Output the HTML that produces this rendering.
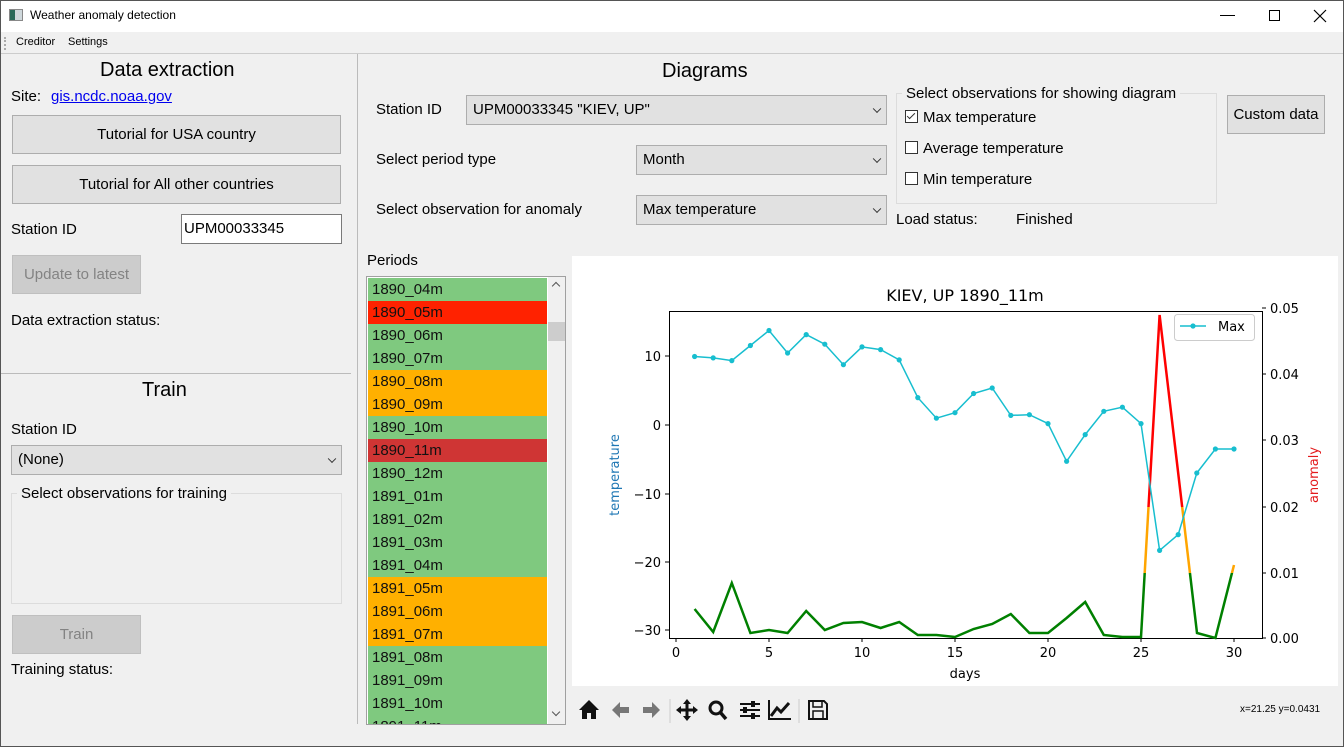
<!DOCTYPE html>
<html><head><meta charset="utf-8"><style>
*{box-sizing:border-box;margin:0;padding:0}
body{width:1344px;height:747px;overflow:hidden;background:#f0f0f0;font-family:"Liberation Sans",sans-serif;font-size:15px;color:#000;position:relative}
.a{position:absolute;white-space:nowrap}
.btn{position:absolute;background:#e1e1e1;border:1px solid #adadad;text-align:center}
.dis{background:#cccccc;border-color:#bfbfbf;color:#838383}
.cb{position:absolute;background:#e1e1e1;border:1px solid #adadad;padding-left:6px}
.cb:after{content:"";position:absolute;right:6px;top:50%;width:5px;height:5px;border-right:1px solid #333;border-bottom:1px solid #333;transform:translateY(-70%) rotate(45deg)}
.chk{display:inline-block;width:13px;height:13px;border:1px solid #333;background:#fff;vertical-align:-1px;margin-right:5px;position:relative}
.li{height:23px;line-height:23px;padding-left:4px;font-size:15px;color:#111}
.g{background:#7fc97f}.r{background:#ff2200}.o{background:#ffb000}.s{background:#cf3534}
svg text{font-family:"DejaVu Sans",sans-serif}
</style></head><body>
<div class="a" style="left:0;top:0;width:1344px;height:32px;background:#fff"></div>
<div class="a" style="left:9px;top:9px;width:14px;height:12px;border:1px solid #888;background:linear-gradient(90deg,#2a6a5a 40%,#cfd8dc 40%)"></div>
<div class="a" style="left:30px;top:8px;font-size:12px">Weather anomaly detection</div>
<div class="a" style="left:1220px;top:15px;width:15px;height:1px;background:#000"></div>
<div class="a" style="left:1269px;top:10px;width:11px;height:11px;border:1px solid #000"></div>
<svg class="a" style="left:1313px;top:9px" width="14" height="14"><path d="M1 1L13 13M13 1L1 13" stroke="#000" stroke-width="1.2"/></svg>
<div class="a" style="left:4px;top:37px;width:2px;height:13px;border-left:2px dotted #aaa"></div>
<div class="a" style="left:16px;top:36px;font-size:11px">Creditor</div>
<div class="a" style="left:68px;top:36px;font-size:11px">Settings</div>
<div class="a" style="left:0;top:53px;width:1344px;height:1px;background:#ccc"></div>
<div class="a" style="left:357px;top:54px;width:1px;height:670px;background:#bbb"></div>

<div class="a" style="left:100px;top:59px;font-size:20px">Data extraction</div>
<div class="a" style="left:11px;top:88px">Site:</div>
<div class="a" style="left:51px;top:88px;color:#00e;text-decoration:underline">gis.ncdc.noaa.gov</div>
<div class="btn" style="left:12px;top:115px;width:329px;height:39px;line-height:37px">Tutorial for USA country</div>
<div class="btn" style="left:12px;top:165px;width:329px;height:39px;line-height:37px">Tutorial for All other countries</div>
<div class="a" style="left:11px;top:221px">Station ID</div>
<div class="a" style="left:181px;top:214px;width:161px;height:30px;background:#fff;border:1px solid #7a7a7a;padding:5px 2px">UPM00033345</div>
<div class="btn dis" style="left:12px;top:255px;width:129px;height:39px;line-height:37px">Update to latest</div>
<div class="a" style="left:11px;top:312px">Data extraction status:</div>
<div class="a" style="left:0;top:373px;width:351px;height:1px;background:#bbb"></div>
<div class="a" style="left:142px;top:379px;font-size:20px">Train</div>
<div class="a" style="left:11px;top:421px">Station ID</div>
<div class="cb" style="left:11px;top:445px;width:331px;height:30px;line-height:28px">(None)</div>
<div class="a" style="left:11px;top:493px;width:331px;height:111px;border:1px solid #dcdcdc"></div>
<div class="a" style="left:17px;top:485px;background:#f0f0f0;padding:0 4px">Select observations for training</div>
<div class="btn dis" style="left:12px;top:615px;width:129px;height:39px;line-height:37px">Train</div>
<div class="a" style="left:11px;top:661px">Training status:</div>

<div class="a" style="left:662px;top:60px;font-size:20px">Diagrams</div>
<div class="a" style="left:376px;top:101px">Station ID</div>
<div class="cb" style="left:466px;top:95px;width:421px;height:30px;line-height:28px">UPM00033345 "KIEV, UP"</div>
<div class="a" style="left:376px;top:151px">Select period type</div>
<div class="cb" style="left:636px;top:145px;width:251px;height:30px;line-height:28px">Month</div>
<div class="a" style="left:376px;top:201px">Select observation for anomaly</div>
<div class="cb" style="left:636px;top:195px;width:251px;height:30px;line-height:28px">Max temperature</div>
<div class="a" style="left:896px;top:93px;width:321px;height:111px;border:1px solid #dcdcdc"></div>
<div class="a" style="left:902px;top:85px;background:#f0f0f0;padding:0 4px">Select observations for showing diagram</div>
<div class="a" style="left:905px;top:109px"><span class="chk"><span style="position:absolute;left:3px;top:0;width:4px;height:8px;border-right:1px solid #333;border-bottom:1px solid #333;transform:rotate(45deg)"></span></span>Max temperature</div>
<div class="a" style="left:905px;top:140px"><span class="chk"></span>Average temperature</div>
<div class="a" style="left:905px;top:171px"><span class="chk"></span>Min temperature</div>
<div class="btn" style="left:1227px;top:95px;width:98px;height:39px;line-height:37px">Custom data</div>
<div class="a" style="left:896px;top:211px">Load status:</div>
<div class="a" style="left:1016px;top:211px">Finished</div>

<div class="a" style="left:367px;top:252px">Periods</div>
<div class="a" style="left:366px;top:276px;width:200px;height:449px;border:1px solid #a0a0a0;background:#fff;overflow:hidden">
<div style="position:absolute;left:1px;top:1px;width:179px">
<div class="li g">1890_04m</div><div class="li r">1890_05m</div><div class="li g">1890_06m</div><div class="li g">1890_07m</div><div class="li o">1890_08m</div><div class="li o">1890_09m</div><div class="li g">1890_10m</div><div class="li s">1890_11m</div><div class="li g">1890_12m</div><div class="li g">1891_01m</div><div class="li g">1891_02m</div><div class="li g">1891_03m</div><div class="li g">1891_04m</div><div class="li o">1891_05m</div><div class="li o">1891_06m</div><div class="li o">1891_07m</div><div class="li g">1891_08m</div><div class="li g">1891_09m</div><div class="li g">1891_10m</div><div class="li g">1891_11m</div></div>
<div style="position:absolute;left:181px;top:0;width:17px;height:447px;background:#f0f0f0"></div>
<div style="position:absolute;left:181px;top:45px;width:17px;height:19px;background:#cdcdcd"></div>
<div style="position:absolute;left:186px;top:6px;width:6px;height:6px;border-left:1px solid #555;border-top:1px solid #555;transform:rotate(45deg)"></div>
<div style="position:absolute;left:186px;top:432px;width:6px;height:6px;border-right:1px solid #555;border-bottom:1px solid #555;transform:rotate(45deg)"></div>
</div>

<svg class="a" style="left:572px;top:256px" width="766" height="430" viewBox="572 256 766 430">
<rect x="572" y="256" width="766" height="430" fill="#fff"/>
<defs>
<clipPath id="cg"><rect x="572" y="573" width="766" height="120"/></clipPath>
<clipPath id="co"><rect x="572" y="507" width="766" height="66"/></clipPath>
<clipPath id="cr"><rect x="572" y="256" width="766" height="251"/></clipPath>
</defs>
<text x="965" y="301" font-size="16" text-anchor="middle">KIEV, UP 1890_11m</text>
<rect x="669.5" y="311.5" width="593" height="327" fill="none" stroke="#000" stroke-width="1"/>
<g font-size="13" text-anchor="end">
<line x1="665" x2="669" y1="356" y2="356" stroke="#000"/><text x="661" y="361">10</text>
<line x1="665" x2="669" y1="425" y2="425" stroke="#000"/><text x="661" y="430">0</text>
<line x1="665" x2="669" y1="494" y2="494" stroke="#000"/><text x="661" y="499">−10</text>
<line x1="665" x2="669" y1="562" y2="562" stroke="#000"/><text x="661" y="567">−20</text>
<line x1="665" x2="669" y1="630" y2="630" stroke="#000"/><text x="661" y="635">−30</text>
</g>
<g font-size="13" text-anchor="start">
<line x1="1262" x2="1266" y1="308" y2="308" stroke="#000"/><text x="1270" y="313">0.05</text>
<line x1="1262" x2="1266" y1="374" y2="374" stroke="#000"/><text x="1270" y="379">0.04</text>
<line x1="1262" x2="1266" y1="440" y2="440" stroke="#000"/><text x="1270" y="445">0.03</text>
<line x1="1262" x2="1266" y1="507" y2="507" stroke="#000"/><text x="1270" y="512">0.02</text>
<line x1="1262" x2="1266" y1="573" y2="573" stroke="#000"/><text x="1270" y="578">0.01</text>
<line x1="1262" x2="1266" y1="638" y2="638" stroke="#000"/><text x="1270" y="643">0.00</text>
</g>
<g font-size="13" text-anchor="middle">
<line x1="676" x2="676" y1="638" y2="642" stroke="#000"/><text x="676" y="657">0</text>
<line x1="769" x2="769" y1="638" y2="642" stroke="#000"/><text x="769" y="657">5</text>
<line x1="862" x2="862" y1="638" y2="642" stroke="#000"/><text x="862" y="657">10</text>
<line x1="955" x2="955" y1="638" y2="642" stroke="#000"/><text x="955" y="657">15</text>
<line x1="1048" x2="1048" y1="638" y2="642" stroke="#000"/><text x="1048" y="657">20</text>
<line x1="1141" x2="1141" y1="638" y2="642" stroke="#000"/><text x="1141" y="657">25</text>
<line x1="1234" x2="1234" y1="638" y2="642" stroke="#000"/><text x="1234" y="657">30</text>
<text x="965" y="678">days</text>
</g>
<text transform="translate(619,475) rotate(-90)" font-size="13" fill="#1f77b4" text-anchor="middle">temperature</text>
<text transform="translate(1318,475) rotate(-90)" font-size="13" fill="#e31a1c" text-anchor="middle">anomaly</text>
<g fill="none" stroke-width="2.5">
<polyline clip-path="url(#cg)" stroke="#008000" points="694.6,609 713.2,632 731.8,583 750.4,633 769,630 787.6,633 806.2,611 824.8,630 843.4,623 862,622 880.6,628 899.2,622 917.8,635 936.4,635 955,637 973.6,629 992.2,624 1010.8,614 1029.4,633 1048,633 1066.6,618 1085.2,602 1103.8,635 1122.4,637 1141,637 1159.6,315 1197,633 1215.4,638 1234,565"/>
<polyline clip-path="url(#co)" stroke="#ffa500" points="694.6,609 713.2,632 731.8,583 750.4,633 769,630 787.6,633 806.2,611 824.8,630 843.4,623 862,622 880.6,628 899.2,622 917.8,635 936.4,635 955,637 973.6,629 992.2,624 1010.8,614 1029.4,633 1048,633 1066.6,618 1085.2,602 1103.8,635 1122.4,637 1141,637 1159.6,315 1197,633 1215.4,638 1234,565"/>
<polyline clip-path="url(#cr)" stroke="#ff0000" points="1141,637 1159.6,315 1197,633"/>
</g>
<polyline fill="none" stroke="#17becf" stroke-width="1.5" points="694.6,356.5 713.2,357.9 731.8,360.6 750.4,345.5 769,330.5 787.6,353 806.2,334.6 824.8,344.2 843.4,364.7 862,346.9 880.6,349.6 899.2,359.9 917.8,397.6 936.4,418.2 955,412.7 973.6,393.5 992.2,388 1010.8,415.4 1029.4,414.7 1048,423.6 1066.6,461.3 1085.2,434.6 1103.8,411.3 1122.4,407.2 1141,423.6 1159.6,550.4 1178.2,534.6 1196.8,473 1215.4,449 1234,449"/>
<g fill="#17becf">
<circle cx="694.6" cy="356.5" r="2.6"/><circle cx="713.2" cy="357.9" r="2.6"/><circle cx="731.8" cy="360.6" r="2.6"/><circle cx="750.4" cy="345.5" r="2.6"/><circle cx="769" cy="330.5" r="2.6"/><circle cx="787.6" cy="353" r="2.6"/><circle cx="806.2" cy="334.6" r="2.6"/><circle cx="824.8" cy="344.2" r="2.6"/><circle cx="843.4" cy="364.7" r="2.6"/><circle cx="862" cy="346.9" r="2.6"/><circle cx="880.6" cy="349.6" r="2.6"/><circle cx="899.2" cy="359.9" r="2.6"/><circle cx="917.8" cy="397.6" r="2.6"/><circle cx="936.4" cy="418.2" r="2.6"/><circle cx="955" cy="412.7" r="2.6"/><circle cx="973.6" cy="393.5" r="2.6"/><circle cx="992.2" cy="388" r="2.6"/><circle cx="1010.8" cy="415.4" r="2.6"/><circle cx="1029.4" cy="414.7" r="2.6"/><circle cx="1048" cy="423.6" r="2.6"/><circle cx="1066.6" cy="461.3" r="2.6"/><circle cx="1085.2" cy="434.6" r="2.6"/><circle cx="1103.8" cy="411.3" r="2.6"/><circle cx="1122.4" cy="407.2" r="2.6"/><circle cx="1141" cy="423.6" r="2.6"/><circle cx="1159.6" cy="550.4" r="2.6"/><circle cx="1178.2" cy="534.6" r="2.6"/><circle cx="1196.8" cy="473" r="2.6"/><circle cx="1215.4" cy="449" r="2.6"/><circle cx="1234" cy="449" r="2.6"/>
</g>
<rect x="1174.5" y="314.5" width="80" height="26" rx="3" fill="#fff" stroke="#ccc"/>
<line x1="1180" x2="1206" y1="326" y2="326" stroke="#17becf" stroke-width="1.5"/><circle cx="1193" cy="326" r="2.6" fill="#17becf"/>
<text x="1218" y="331" font-size="13">Max</text>
</svg>

<svg class="a" style="left:576px;top:696px" width="260" height="28" viewBox="0 0 260 28">
<path d="M3 14 L13 4 L23 14 L20 14 L20 23 L15 23 L15 17 L11 17 L11 23 L6 23 L6 14 Z" fill="#111"/>
<path d="M36 14 L44 6 L44 11 L53 11 L53 17 L44 17 L44 22 Z" fill="#777"/>
<path d="M84 14 L76 6 L76 11 L67 11 L67 17 L76 17 L76 22 Z" fill="#777"/>
<line x1="94" y1="3" x2="94" y2="27" stroke="#ccc"/>
<path d="M111 3 L115 8 L112.5 8 L112.5 12.5 L117 12.5 L117 10 L122 14 L117 18 L117 15.5 L112.5 15.5 L112.5 20 L115 20 L111 25 L107 20 L109.5 20 L109.5 15.5 L105 15.5 L105 18 L100 14 L105 10 L105 12.5 L109.5 12.5 L109.5 8 L107 8 Z" fill="#111"/>
<circle cx="140" cy="12" r="6" fill="none" stroke="#111" stroke-width="3"/><line x1="144" y1="16" x2="150" y2="23" stroke="#111" stroke-width="3.5"/>
<g stroke="#111" stroke-width="2"><line x1="164" y1="8" x2="184" y2="8"/><line x1="164" y1="14" x2="184" y2="14"/><line x1="164" y1="20" x2="184" y2="20"/></g>
<g fill="#111"><rect x="175" y="5" width="4" height="6"/><rect x="167" y="11" width="4" height="6"/><rect x="175" y="17" width="4" height="6"/></g>
<path d="M193 4 L193 23 L215 23" fill="none" stroke="#111" stroke-width="2"/>
<path d="M195 20 L201 12 L205 16 L213 7" fill="none" stroke="#111" stroke-width="3"/>
<line x1="223" y1="3" x2="223" y2="27" stroke="#ccc"/>
<path d="M233 5 L248 5 L251 8 L251 23 L233 23 Z" fill="none" stroke="#111" stroke-width="2"/>
<rect x="237" y="5" width="9" height="6" fill="none" stroke="#111" stroke-width="1.5"/>
<rect x="237" y="15" width="10" height="8" fill="none" stroke="#111" stroke-width="1.5"/>
</svg>
<div class="a" style="left:1240px;top:704px;font-size:10px">x=21.25 y=0.0431</div>
<div class="a" style="left:0;top:0;width:1344px;height:747px;border:1px solid #555;pointer-events:none"></div>
</body></html>
